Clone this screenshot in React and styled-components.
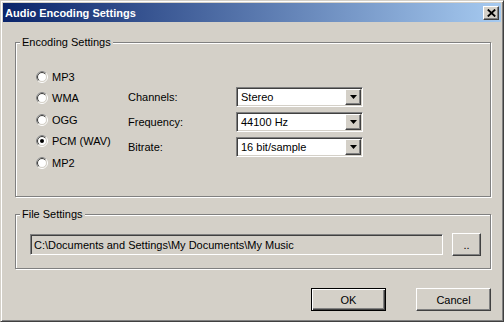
import React, { useState } from "react";
import styled, { createGlobalStyle } from "styled-components";

const GlobalStyle = createGlobalStyle`
    html, body {
        margin: 0;
        padding: 0;
        background: #d4d0c8;
    }
    body {
        font-family: "Liberation Sans", Arial, sans-serif;
        font-size: 11px;
        color: #000;
    }
`

const Window = styled.div`
    width: 504px;
    height: 322px;
    box-sizing: border-box;
    background: #d4d0c8;
    border: 1px solid;
    border-color: #d4d0c8 #404040 #404040 #d4d0c8;
    box-shadow: inset 1px 1px #fff, inset -1px -1px #808080;
    padding: 2px;
    display: flex;
    flex-direction: column;
`

const TitleBar = styled.div`
    height: 19px;
    flex-shrink: 0;
    background: linear-gradient(to right, #0a246a, #a6caf0);
    display: flex;
    align-items: center;
    justify-content: space-between;
    padding: 0 2px 0 2px;
    color: #fff;
    font-weight: bold;
`

const raised = `
    background: #d4d0c8;
    box-sizing: border-box;
    border: 1px solid;
    border-color: #fff #404040 #404040 #fff;
    box-shadow: inset -1px -1px #808080, inset 1px 1px #d4d0c8;
`

const sunken = `
    box-sizing: border-box;
    border: 1px solid;
    border-color: #808080 #fff #fff #808080;
    box-shadow: inset 1px 1px #404040, inset -1px -1px #d4d0c8;
`

const CloseButton = styled.div`
    ${raised}
    width: 16px;
    height: 14px;
    display: flex;
    align-items: center;
    justify-content: center;
`

const Body = styled.div`
    flex: 1;
    display: flex;
    flex-direction: column;
    padding: 20px 10px 0 12px;
`

const Group = styled.div`
    height: ${p => p.$height}px;
    margin-top: ${p => p.$top || 0}px;
    box-sizing: border-box;
    border: 1px solid #808080;
    box-shadow: inset 1px 1px #fff, 1px 1px #fff;
    display: flex;
    flex-direction: column;
`

const GroupLabel = styled.div`
    align-self: flex-start;
    margin: -7px 0 0 4px;
    padding: 0 2px;
    line-height: 13px;
    background: #d4d0c8;
`

const EncodingContent = styled.div`
    display: flex;
    align-items: flex-start;
    margin-top: 17px;
    padding-left: 20px;
`

const RadioList = styled.div`
    width: 92px;
    display: flex;
    flex-direction: column;
`

const RadioRow = styled.label`
    height: 21.5px;
    display: flex;
    align-items: center;
    gap: 4px;
    cursor: default;
`

const SettingsGrid = styled.div`
    margin-top: 21px;
    display: grid;
    grid-template-columns: 108px 127px;
    grid-auto-rows: 20px;
    row-gap: 5px;
    align-items: center;
`

const Combo = styled.div`
    ${sunken}
    height: 20px;
    background: #fff;
    display: flex;
    align-items: center;
    padding: 1px;
`

const ComboText = styled.span`
    flex: 1;
    padding-left: 3px;
`

const DropButton = styled.div`
    ${raised}
    width: 16px;
    height: 16px;
    display: flex;
    align-items: center;
    justify-content: center;
`

const FileRow = styled.div`
    margin-top: 12px;
    padding-left: 14px;
    display: flex;
    align-items: center;
    gap: 9px;
`

const PathField = styled.div`
    ${sunken}
    width: 413px;
    height: 21px;
    background: #d4d0c8;
    display: flex;
    align-items: center;
    padding-left: 3px;
    white-space: nowrap;
`

const Button = styled.button`
    ${raised}
    width: ${p => p.$width}px;
    height: 23px;
    padding: 0;
    font: inherit;
    color: #000;
    ${p => p.$default && `
        border: 1px solid #000;
        box-shadow: inset 1px 1px #fff, inset -1px -1px #404040, inset -2px -2px #808080;
    `}
`

const ButtonRow = styled.div`
    margin-top: 19px;
    display: flex;
    justify-content: flex-end;
    gap: 30px;
`

function RadioIcon({ checked }) {
    return (
        <svg width="12" height="12" viewBox="0 0 12 12">
            <circle cx="6" cy="6" r="5.5" fill="none" stroke="#fff" />
            <path d="M2.1 9.9 A5.5 5.5 0 0 1 9.9 2.1" fill="none" stroke="#808080" />
            <circle cx="6" cy="6" r="4.5" fill="#fff" stroke="#d4d0c8" />
            <path d="M2.8 9.2 A4.5 4.5 0 0 1 9.2 2.8" fill="none" stroke="#404040" />
            {checked && <circle cx="6" cy="6" r="2" fill="#000" />}
        </svg>
    );
}

function Arrow() {
    return (
        <svg width="7" height="4" viewBox="0 0 7 4">
            <path d="M0 0 H7 L3.5 4 Z" fill="#000" />
        </svg>
    );
}

function CloseGlyph() {
    return (
        <svg width="9" height="8" viewBox="0 0 9 8">
            <path d="M0.8 0.5 L8.2 7.5 M8.2 0.5 L0.8 7.5" stroke="#000" strokeWidth="1.8" />
        </svg>
    );
}

const formats = ["MP3", "WMA", "OGG", "PCM (WAV)", "MP2"];

const settings = [
    { label: "Channels:", value: "Stereo" },
    { label: "Frequency:", value: "44100 Hz" },
    { label: "Bitrate:", value: "16 bit/sample" },
];

function App() {
    const [format, setFormat] = useState("PCM (WAV)");

    return (
        <>
            <GlobalStyle />
            <Window>
                <TitleBar>
                    <span>Audio Encoding Settings</span>
                    <CloseButton><CloseGlyph /></CloseButton>
                </TitleBar>
                <Body>
                    <Group $height={155}>
                        <GroupLabel>Encoding Settings</GroupLabel>
                        <EncodingContent>
                            <RadioList>
                                {formats.map(f => (
                                    <RadioRow key={f} onClick={() => setFormat(f)}>
                                        <RadioIcon checked={format === f} />
                                        <span>{f}</span>
                                    </RadioRow>
                                ))}
                            </RadioList>
                            <SettingsGrid>
                                {settings.map(s => (
                                    <React.Fragment key={s.label}>
                                        <span>{s.label}</span>
                                        <Combo>
                                            <ComboText>{s.value}</ComboText>
                                            <DropButton><Arrow /></DropButton>
                                        </Combo>
                                    </React.Fragment>
                                ))}
                            </SettingsGrid>
                        </EncodingContent>
                    </Group>
                    <Group $height={55} $top={17}>
                        <GroupLabel>File Settings</GroupLabel>
                        <FileRow>
                            <PathField>C:\Documents and Settings\My Documents\My Music</PathField>
                            <Button $width={29}>..</Button>
                        </FileRow>
                    </Group>
                    <ButtonRow>
                        <Button $width={75} $default>OK</Button>
                        <Button $width={75}>Cancel</Button>
                    </ButtonRow>
                </Body>
            </Window>
        </>
    );
}

export default App;
